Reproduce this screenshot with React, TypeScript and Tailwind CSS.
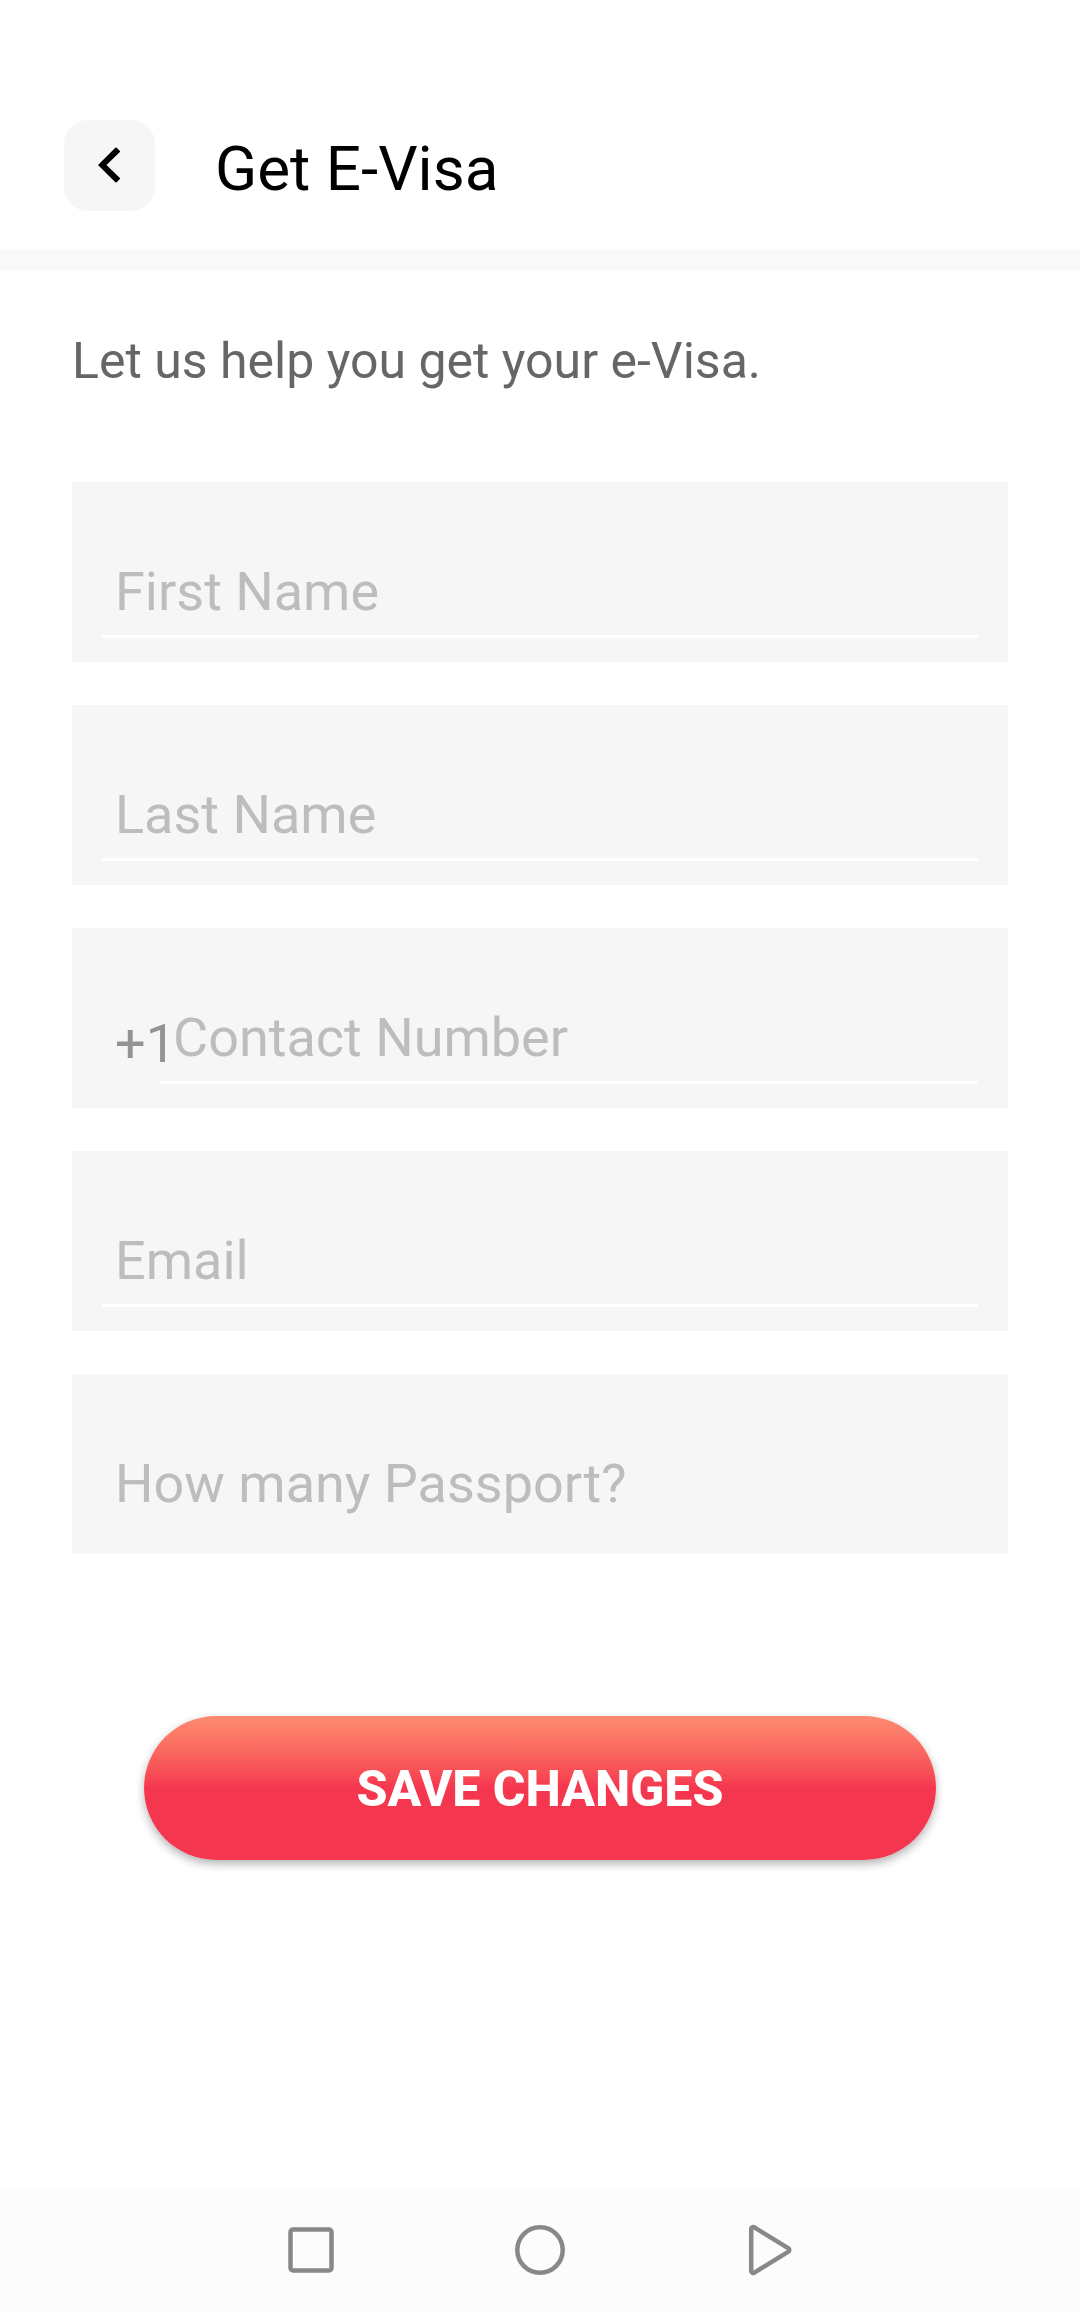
type FieldProps = {
  label: string;
  type?: string;
  prefix?: string;
  underline?: boolean;
};

function Field({ label, type = "text", prefix, underline = true }: FieldProps) {
  return (
    <label className="flex h-[180px] items-end bg-[#f6f6f6] px-[30px] pb-6">
      {prefix && (
        <span className="-mr-2 w-[66px] pb-1 pl-[13px] text-[54px] leading-[72px] text-[#939393]">{prefix}</span>
      )}
      <input
        aria-label={label}
        type={type}
        placeholder={label}
        className={
          "h-[84px] min-w-0 flex-1 border-b-[3px] bg-transparent pb-1.5 pl-[13px] text-[54px] leading-[64px] text-[#333333] outline-none placeholder:text-[#bdbdbd] placeholder:opacity-100 " +
          (underline ? "border-white" : "border-transparent")
        }
      />
    </label>
  );
}

export default function App() {
  return (
    <div className="flex min-h-screen flex-col bg-white font-['Roboto',sans-serif]">
      <header className="flex items-center border-b-[22px] border-[#fafafa] px-16 pt-[120px] pb-[38px]">
        <button
          type="button"
          aria-label="Back"
          className="flex size-[91px] shrink-0 items-center justify-center rounded-3xl bg-[#f6f6f6]"
        >
          <svg viewBox="0 0 24 24" className="mb-0.5 size-[72px]" fill="#000000" aria-hidden="true">
            <path d="M15.3 7.3 14.4 6.400q-.4-.4-.8 0L8 12l5.600 5.600q.4.4.8 0l.9-.9q.2-.2 0-.4L10.830 12l4.470-4.300q.2-.2 0-.4z" />
          </svg>
        </button>
        <h1 className="ml-[60px] pt-1.5 text-[62px] leading-[72px] text-black">Get E-Visa</h1>
      </header>

      <main className="px-[72px] pt-[60px]">
        <p className="text-[50px] leading-[60px] text-[#666666]">Let us help you get your e-Visa.</p>
        <form className="mt-[91px]" onSubmit={(e) => e.preventDefault()}>
          <div className="flex flex-col gap-[43px]">
            <Field label="First Name" />
            <Field label="Last Name" />
            <Field label="Contact Number" type="tel" prefix="+1" />
            <Field label="Email" type="email" />
            <Field label="How many Passport?" underline={false} />
          </div>
          <div className="mt-[162px] px-[72px]">
            <button
              type="submit"
              className="h-36 w-full rounded-full bg-linear-to-b from-[#fd8b70] via-[#f5364f] to-[#f5364f] pt-0.5 text-[50px] leading-[60px] font-extrabold text-white shadow-[0_4px_10px_rgba(0,0,0,0.3)]"
            >
              SAVE CHANGES
            </button>
          </div>
        </form>
      </main>

      <nav aria-label="System" className="mt-auto flex h-[124px] items-center justify-center gap-[165px] bg-[#fcfcfc]">
        <button type="button" aria-label="Recent apps">
          <svg viewBox="0 0 64 64" className="size-16" fill="none" stroke="#888888" strokeWidth="4.5" aria-hidden="true">
            <rect x="11.500" y="11.500" width="41" height="41" rx="2.500" />
          </svg>
        </button>
        <button type="button" aria-label="Home">
          <svg viewBox="0 0 64 64" className="size-16" fill="none" stroke="#888888" strokeWidth="4.5" aria-hidden="true">
            <circle cx="32" cy="32" r="22.700" />
          </svg>
        </button>
        <button type="button" aria-label="Back">
          <svg
            viewBox="0 0 64 64"
            className="size-16"
            fill="none"
            stroke="#888888"
            strokeWidth="4.5"
            strokeLinejoin="round"
            aria-hidden="true"
          >
            <path d="M14.200 11a2 2 0 0 1 3.200-1.600L51.500 30.400a2 2 0 0 1 0 3.200L17.400 54.600a2 2 0 0 1-3.200-1.600z" />
          </svg>
        </button>
      </nav>
    </div>
  );
}
